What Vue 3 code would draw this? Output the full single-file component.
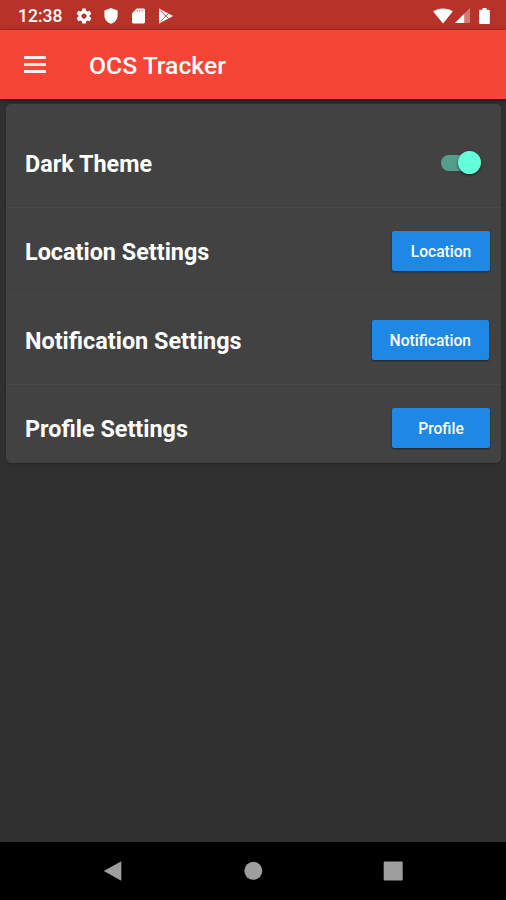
<template>
  <div class="screen">
    <div class="status-bar">
      <span class="clock">12:38</span>
      <div class="status-left">
        <svg class="gear" width="18" height="18" viewBox="0 0 24 24">
          <path d="M19.43 12.98c.04-.32.07-.64.07-.98s-.03-.66-.07-.98l2.11-1.65c.19-.15.24-.42.12-.64l-2-3.46c-.12-.22-.39-.3-.61-.22l-2.49 1c-.52-.4-1.08-.73-1.69-.98l-.38-2.65C14.46 2.18 14.25 2 14 2h-4c-.25 0-.46.18-.49.42l-.38 2.65c-.61.25-1.17.59-1.69.98l-2.49-1c-.23-.09-.49 0-.61.22l-2 3.46c-.13.22-.07.49.12.64l2.11 1.65c-.04.32-.07.65-.07.98s.03.66.07.98l-2.11 1.65c-.19.15-.24.42-.12.64l2 3.46c.12.22.39.3.61.22l2.49-1c.52.4 1.08.73 1.69.98l.38 2.65c.03.24.24.42.49.42h4c.25 0 .46-.18.49-.42l.38-2.65c.61-.25 1.17-.59 1.69-.98l2.49 1c.23.09.49 0 .61-.22l2-3.46c.12-.22.07-.49-.12-.64l-2.11-1.65zM12 15.5c-1.93 0-3.5-1.57-3.5-3.5s1.57-3.5 3.5-3.5 3.5 1.57 3.5 3.5-1.57 3.5-3.5 3.5z" />
        </svg>
        <svg class="shield" width="14" height="16" viewBox="0 0 14 16">
          <path d="M7 0L.4 2.6v4.9c0 3.9 2.7 7 6.6 8.3 3.9-1.3 6.6-4.4 6.6-8.3V2.6z" />
        </svg>
        <svg class="sd-card" width="13" height="16" viewBox="0 0 13 16">
          <path d="M4.7.5h6.9c.8 0 1.4.6 1.4 1.4v12.2c0 .8-.6 1.4-1.4 1.4H1.4C.6 15.5 0 14.9 0 14.1V5.2z" />
          <path class="pins" d="M4.6 2h1.2v1.8H4.6zM7 2h1.2v1.8H7zM9.4 2h1.2v1.8H9.4z" />
        </svg>
        <svg class="play" width="16" height="16" viewBox="0 0 16 16">
          <path d="M1 .6L15.2 8 1 15.4z" />
          <path class="cuts" d="M2.5 2.5L10.5 10.5M2.5 13.5L10.5 5.5" />
        </svg>
      </div>
      <div class="status-right">
        <svg width="20" height="16" viewBox="0 0 20 16">
          <path d="M10 15.5L.2 3.6C2.8 1.5 6.2.4 10 .4s7.2 1.1 9.8 3.2z" />
        </svg>
        <svg class="signal" width="15" height="15" viewBox="0 0 15 15">
          <path class="dim" d="M15 0v15H0z" />
          <path d="M9.2 5.8V15H0z" />
        </svg>
        <svg class="battery" width="11" height="16" viewBox="0 0 11 16">
          <path d="M3.5 0h4v1.7h2.2c.7 0 1.1.5 1.1 1.1v12.1c0 .6-.5 1.1-1.1 1.1H1.3C.7 16 .2 15.5.2 14.9V2.8c0-.6.5-1.1 1.1-1.1h2.2z" />
        </svg>
      </div>
    </div>

    <header class="app-bar">
      <button class="menu-btn" aria-label="Menu">
        <span></span>
        <span></span>
        <span></span>
      </button>
      <h1>OCS Tracker</h1>
    </header>

    <main class="content">
      <ul class="settings-card">
        <li class="setting">
          <span class="setting-title">Dark Theme</span>
          <button class="switch" :class="{ on: darkTheme }" aria-label="Dark Theme" @click="darkTheme = !darkTheme">
            <span class="thumb"></span>
          </button>
        </li>
        <li class="setting" v-for="item in items" :key="item.action">
          <span class="setting-title">{{ item.title }}</span>
          <button class="action-btn">{{ item.action }}</button>
        </li>
      </ul>
    </main>

    <nav class="nav-bar">
      <svg width="20" height="22" viewBox="0 0 20 22">
        <path d="M18.3 1.2v19.6L.8 11z" stroke-linejoin="round" />
      </svg>
      <svg width="20" height="22" viewBox="0 0 20 22">
        <circle cx="10.3" cy="10.8" r="9" />
      </svg>
      <svg width="20" height="22" viewBox="0 0 20 22">
        <rect x=".7" y="1.5" width="19" height="19" rx="1" />
      </svg>
    </nav>
  </div>
</template>

<script setup>
import { ref } from 'vue';

const darkTheme = ref(true);

const items = ref([
  { title: 'Location Settings', action: 'Location' },
  { title: 'Notification Settings', action: 'Notification' },
  { title: 'Profile Settings', action: 'Profile' },
]);
</script>

<style>
body {
  margin: 0;
  background-color: #303030;
}
</style>

<style scoped>
* {
  box-sizing: border-box;
}

button {
  border: none;
  padding: 0;
  cursor: pointer;
  font-family: inherit;
}

.screen {
  display: flex;
  flex-direction: column;
  height: 900px;
  background-color: #303030;
  color: #fff;
  font-family: Roboto, sans-serif;
}

.status-bar {
  display: flex;
  align-items: center;
  height: 30px;
  padding: 1px 16px 0 18px;
  background-color: #b73229;
}

.status-bar svg {
  display: block;
  fill: #fff;
}

.clock {
  width: 44px;
  font-size: 17.5px;
  font-weight: 500;
  line-height: 30px;
}

.status-left,
.status-right {
  display: flex;
  align-items: center;
}

.status-left {
  margin-left: 13px;
}

.shield {
  margin-left: 11px;
}

.sd-card {
  margin-left: 14px;
}

.play {
  margin-left: 13px;
}

.status-bar .pins {
  fill: #d98f8a;
}

.status-bar .cuts {
  fill: none;
  stroke: #b73229;
  stroke-width: 0.8;
}

.status-right {
  margin-left: auto;
}

.signal {
  margin-left: 2px;
}

.signal .dim {
  opacity: 0.35;
}

.battery {
  margin-left: 9px;
}

.app-bar {
  display: flex;
  flex: none;
  align-items: center;
  height: 69px;
  padding-left: 24px;
  background-color: #f64537;
  box-shadow: 0 1px 4px rgba(0, 0, 0, 0.6);
}

.menu-btn {
  display: flex;
  flex-direction: column;
  gap: 4px;
  width: 22px;
  background: none;
}

.menu-btn span {
  height: 3px;
  background-color: #ffeceb;
}

h1 {
  margin: 2px 0 0 43px;
  font-size: 24.7px;
  font-weight: 500;
  line-height: 32px;
}

.content {
  flex: 1;
  padding: 5px 5px 0 6px;
}

.settings-card {
  height: 358.5px;
  margin: 0;
  padding: 15px 0 0;
  list-style: none;
  background-color: #424242;
  border-radius: 5px;
  box-shadow: 0 1px 2px rgba(0, 0, 0, 0.25);
}

.setting {
  display: flex;
  align-items: center;
  justify-content: space-between;
  height: 88.5px;
  padding: 0 11px 0 19px;
  border-bottom: 1px solid #4a4a4a;
}

.setting:nth-child(2) {
  border-bottom-color: #454545;
}

.setting:last-child {
  border-bottom-color: transparent;
}

.setting-title {
  padding-top: 2px;
  font-size: 23.4px;
  font-weight: 700;
  line-height: 30px;
}

.switch {
  display: flex;
  align-items: center;
  width: 40px;
  height: 16px;
  margin-right: 9px;
  border-radius: 8px;
  background-color: #777;
}

.switch.on {
  justify-content: flex-end;
  background-color: #549e8c;
}

.thumb {
  width: 23px;
  height: 23px;
  border-radius: 50%;
  background-color: #64ffda;
  box-shadow: 0 1px 3px rgba(0, 0, 0, 0.6);
}

.action-btn {
  min-width: 98px;
  height: 40px;
  padding: 2px 18px 0;
  border-radius: 2px;
  background-color: #1e88e5;
  box-shadow: 0 1px 2px rgba(0, 0, 0, 0.5);
  color: #fff;
  font-size: 15.6px;
  font-weight: 500;
}

.setting:nth-child(3) .action-btn {
  margin-right: 1px;
}

.nav-bar {
  display: flex;
  flex: none;
  align-items: center;
  justify-content: center;
  gap: 120px;
  height: 58px;
  background-color: #000;
}

.nav-bar svg {
  fill: #9e9e9e;
  stroke: #9e9e9e;
  stroke-width: 0;
}
</style>
